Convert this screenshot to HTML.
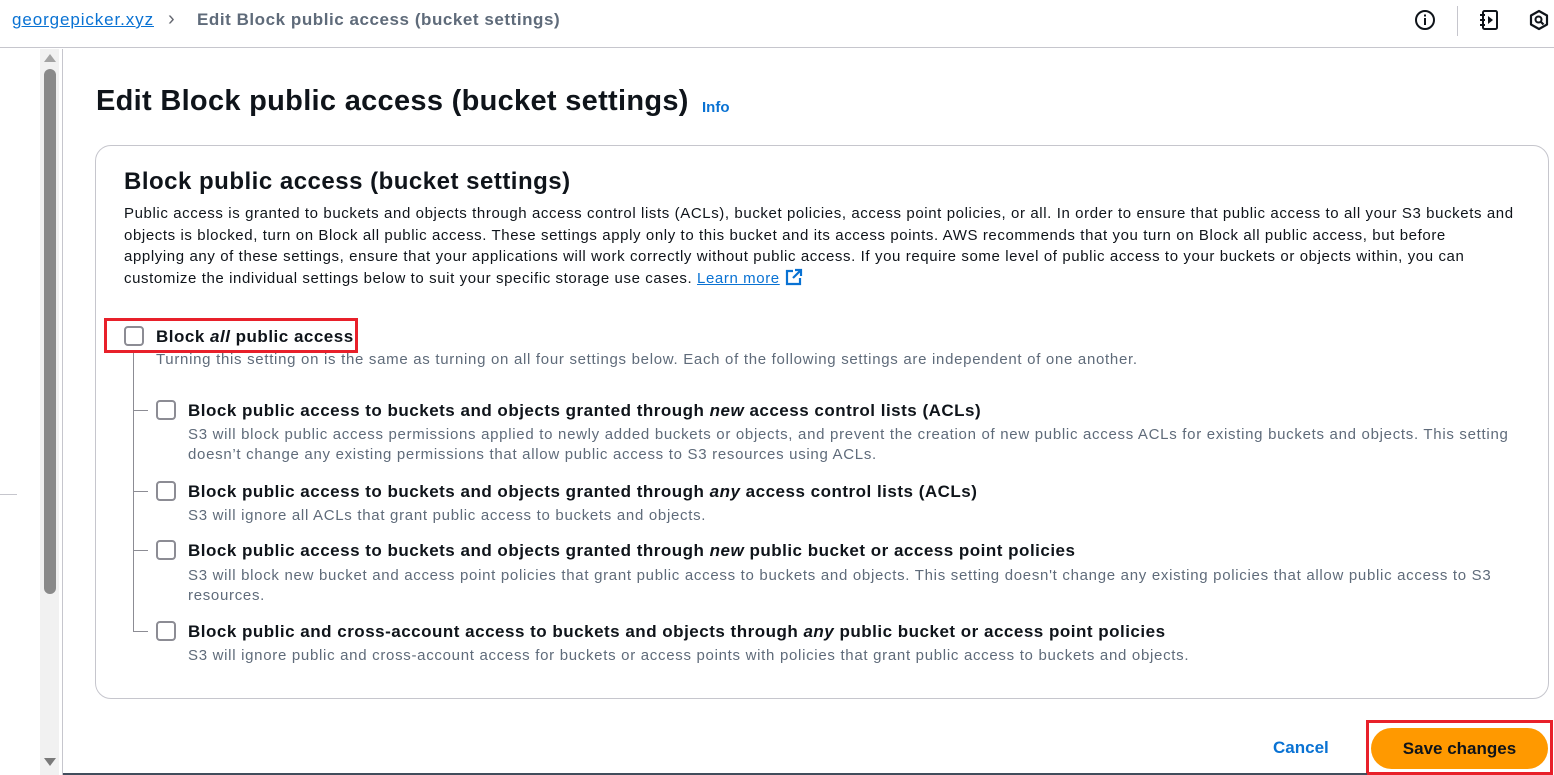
<!DOCTYPE html>
<html><head><meta charset="utf-8"><style>
*{box-sizing:border-box;margin:0;padding:0}
body{width:1554px;height:775px;overflow:hidden;background:#fff;font-family:"Liberation Sans",sans-serif;color:#000716;position:relative}
.abs{position:absolute;white-space:nowrap}
.top{left:0;top:0;width:1554px;height:48px;border-bottom:1px solid #c6c6cd}
.crumb{left:12px;top:10px;font-size:17px;color:#0972d3;text-decoration:underline;letter-spacing:0.9px}
.sep{left:168px;top:8px;font-size:20px;color:#656871}
.cur{left:197px;top:10px;font-size:17px;color:#5f6b7a;font-weight:bold;letter-spacing:0.55px}
.t{font-size:15px;line-height:21.5px;color:#0f141a;letter-spacing:0.6px}
.d{font-size:15px;line-height:20px;color:#5f6b7a;letter-spacing:0.7px}
.h{font-size:17px;font-weight:bold;color:#0f141a;letter-spacing:0.5px}
.cb{width:20px;height:20px;border:2px solid #8c8c94;border-radius:4px;background:#fff}
</style></head><body>
<div class="abs top"></div>
<div class="abs crumb">georgepicker.xyz</div>
<div class="abs sep">&#x203A;</div>
<div class="abs cur">Edit Block public access (bucket settings)</div>
<svg class="abs" style="left:1414px;top:9px" width="22" height="22" viewBox="0 0 22 22"><circle cx="11" cy="11" r="9" fill="none" stroke="#0f141a" stroke-width="2"/><rect x="10" y="9" width="2" height="7" fill="#0f141a"/><rect x="10" y="5.5" width="2" height="2" fill="#0f141a"/></svg>
<div class="abs" style="left:1457px;top:6px;width:1px;height:30px;background:#c6c6cd"></div>
<svg class="abs" style="left:1477px;top:8px" width="24" height="24" viewBox="0 0 24 24"><rect x="6" y="3" width="14" height="18" rx="1.5" fill="none" stroke="#0f141a" stroke-width="2"/><path d="M3 7h5M3 12h5M3 17h5" stroke="#0f141a" stroke-width="2"/><path d="M11 8l5 4-5 4z" fill="#0f141a"/></svg>
<svg class="abs" style="left:1527px;top:8px" width="24" height="24" viewBox="0 0 24 24"><path d="M12 3l8 4.5v9L12 21l-8-4.5v-9z" fill="none" stroke="#0f141a" stroke-width="2.2" stroke-linejoin="round"/><circle cx="11.5" cy="11.5" r="3" fill="none" stroke="#0f141a" stroke-width="2"/><path d="M13.5 13.5l3 3" stroke="#0f141a" stroke-width="2.2"/></svg>

<div class="abs" style="left:-6px;top:76px;font-size:20px;color:#414d5c">&#x2039;</div>
<div class="abs" style="left:0;top:494px;width:17px;height:1px;background:#c6c6cd"></div>
<div class="abs" style="left:40px;top:49px;width:19px;height:726px;background:#f1f1f1"></div>
<div class="abs" style="left:44px;top:69px;width:12px;height:525px;background:#8a8a8a;border-radius:6px"></div>
<div class="abs" style="left:44px;top:54px;width:0;height:0;border-left:6px solid transparent;border-right:6px solid transparent;border-bottom:8px solid #a3a3a3"></div>
<div class="abs" style="left:44px;top:758px;width:0;height:0;border-left:6px solid transparent;border-right:6px solid transparent;border-top:8px solid #7a7a7a"></div>
<div class="abs" style="left:62px;top:49px;width:1px;height:726px;background:#c6c6cd"></div>

<div class="abs" style="left:96px;top:85px;font-size:29px;font-weight:bold;color:#0f141a;letter-spacing:0.3px">Edit Block public access (bucket settings)</div>
<div class="abs" style="left:702px;top:99px;font-size:15px;font-weight:bold;color:#0972d3">Info</div>

<div class="abs" style="left:95px;top:145px;width:1454px;height:554px;border:1px solid #c6c6cd;border-radius:16px"></div>
<div class="abs" style="left:124px;top:168px;font-size:24px;font-weight:bold;color:#0f141a;letter-spacing:0.5px">Block public access (bucket settings)</div>
<div class="abs t" style="left:124px;top:203px">Public access is granted to buckets and objects through access control lists (ACLs), bucket policies, access point policies, or all. In order to ensure that public access to all your S3 buckets and<br>objects is blocked, turn on Block all public access. These settings apply only to this bucket and its access points. AWS recommends that you turn on Block all public access, but before<br>applying any of these settings, ensure that your applications will work correctly without public access. If you require some level of public access to your buckets or objects within, you can<br>customize the individual settings below to suit your specific storage use cases. <span style="color:#0972d3;text-decoration:underline">Learn more</span> <svg width="18" height="18" viewBox="0 0 18 18" style="vertical-align:-3px"><path d="M8 3H2v13h13v-6" fill="none" stroke="#0972d3" stroke-width="2.2"/><path d="M10 2h6v6M16 2l-8 8" fill="none" stroke="#0972d3" stroke-width="2.2"/></svg></div>

<div class="abs" style="left:104px;top:318px;width:254px;height:35px;border:3px solid #e8202a"></div>
<div class="abs cb" style="left:124px;top:326px"></div>
<div class="abs h" style="left:156px;top:327px">Block <i>all</i> public access</div>
<div class="abs d" style="left:156px;top:350px">Turning this setting on is the same as turning on all four settings below. Each of the following settings are independent of one another.</div>
<div class="abs" style="left:133px;top:353px;width:1px;height:279px;background:#8c8c94"></div>

<div class="abs" style="left:133px;top:410px;width:15px;height:1px;background:#8c8c94"></div>
<div class="abs cb" style="left:156px;top:400px"></div>
<div class="abs h" style="left:188px;top:401px">Block public access to buckets and objects granted through <i>new</i> access control lists (ACLs)</div>
<div class="abs d" style="left:188px;top:425px">S3 will block public access permissions applied to newly added buckets or objects, and prevent the creation of new public access ACLs for existing buckets and objects. This setting<br>doesn’t change any existing permissions that allow public access to S3 resources using ACLs.</div>

<div class="abs" style="left:133px;top:491px;width:15px;height:1px;background:#8c8c94"></div>
<div class="abs cb" style="left:156px;top:481px"></div>
<div class="abs h" style="left:188px;top:482px">Block public access to buckets and objects granted through <i>any</i> access control lists (ACLs)</div>
<div class="abs d" style="left:188px;top:506px">S3 will ignore all ACLs that grant public access to buckets and objects.</div>

<div class="abs" style="left:133px;top:550px;width:15px;height:1px;background:#8c8c94"></div>
<div class="abs cb" style="left:156px;top:540px"></div>
<div class="abs h" style="left:188px;top:541px">Block public access to buckets and objects granted through <i>new</i> public bucket or access point policies</div>
<div class="abs d" style="left:188px;top:566px">S3 will block new bucket and access point policies that grant public access to buckets and objects. This setting doesn't change any existing policies that allow public access to S3<br>resources.</div>

<div class="abs" style="left:133px;top:631px;width:15px;height:1px;background:#8c8c94"></div>
<div class="abs cb" style="left:156px;top:621px"></div>
<div class="abs h" style="left:188px;top:622px">Block public and cross-account access to buckets and objects through <i>any</i> public bucket or access point policies</div>
<div class="abs d" style="left:188px;top:646px">S3 will ignore public and cross-account access for buckets or access points with policies that grant public access to buckets and objects.</div>

<div class="abs" style="left:1273px;top:738px;font-size:17px;font-weight:bold;color:#0972d3">Cancel</div>
<div class="abs" style="left:1366px;top:720px;width:187px;height:55px;border:3px solid #e8202a"></div>
<div class="abs" style="left:1371px;top:728px;width:177px;height:41px;background:#ff9900;border-radius:21px;font-size:17px;font-weight:bold;color:#0f141a;text-align:center;line-height:41px">Save changes</div>
<div class="abs" style="left:63px;top:773px;width:1304px;height:2px;background:#414d5c"></div>
</body></html>
